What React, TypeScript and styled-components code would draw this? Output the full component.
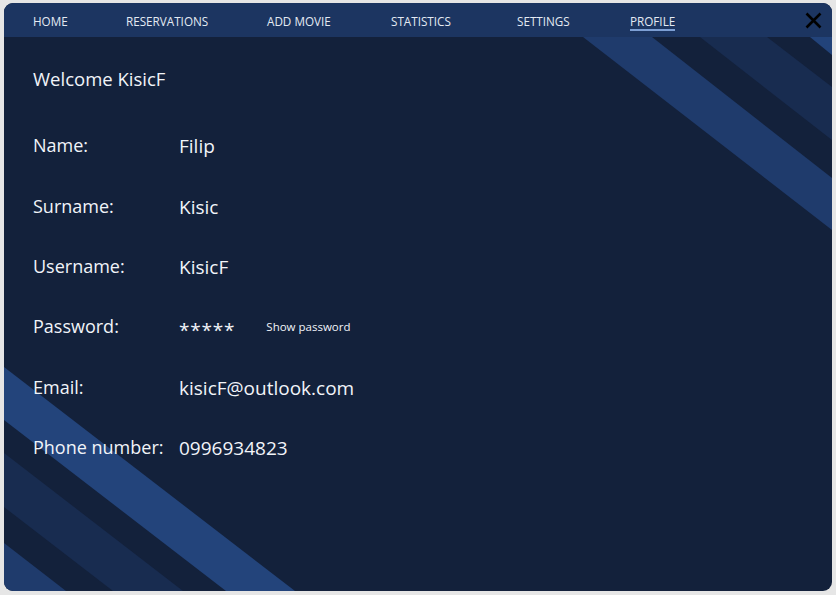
import styled, { createGlobalStyle } from 'styled-components';

const GlobalStyle = createGlobalStyle`
  html, body {
    margin: 0;
    padding: 0;
    background: #e6e6e6;
  }
  * {
    box-sizing: border-box;
  }
`;

// slot widths follow the spacing of the original menu
const navItems = [
  { title: 'Home', width: 93 },
  { title: 'Reservations', width: 141 },
  { title: 'Add movie', width: 124 },
  { title: 'Statistics', width: 126 },
  { title: 'Settings', width: 113 },
  { title: 'Profile', width: 60 },
];

const profile = [
  { label: 'Name:', value: 'Filip' },
  { label: 'Surname:', value: 'Kisic' },
  { label: 'Username:', value: 'KisicF' },
  { label: 'Password:', value: '*****', secret: true },
  { label: 'Email:', value: 'kisicF@outlook.com' },
  { label: 'Phone number:', value: '0996934823' },
];

function Stripes() {
  return (
    <Decor viewBox='0 0 828 554' preserveAspectRatio='none'>
      <polygon points='579,0 648,0 828,141 828,193' fill='#1f3b6c' />
      <polygon points='696,0 763,0 828,50 828,103' fill='#182c50' />
      <polygon points='806,0 828,0 828,18' fill='#22437a' />
      <polygon points='0,330 0,383 222,554 291,554' fill='#23447b' />
      <polygon points='0,416 0,470 109,554 179,554' fill='#182c50' />
      <polygon points='0,506 0,554 62,554' fill='#1f3b6c' />
    </Decor>
  );
}

function App() {
  return (
    <>
      <GlobalStyle />
      <Page>
        <Window>
          <Nav>
            {navItems.map((item) => (
              <NavSlot key={item.title} $width={item.width}>
                <NavItem $active={item.title === 'Profile'}>{item.title}</NavItem>
              </NavSlot>
            ))}
            <Close aria-label='close'>
              <svg width='17' height='17' viewBox='0 0 17 17'>
                <path d='M1.5 1.5 L15.5 15.5 M15.5 1.5 L1.5 15.5' stroke='#000' strokeWidth='2.6' />
              </svg>
            </Close>
          </Nav>
          <Body>
            <Stripes />
            <Content>
              <Welcome>Welcome KisicF</Welcome>
              <Fields>
                {profile.map((row) => (
                  <Row key={row.label}>
                    <Label>{row.label}</Label>
                    <Value $secret={row.secret}>{row.value}</Value>
                    {row.secret && <ShowPassword>Show password</ShowPassword>}
                  </Row>
                ))}
              </Fields>
            </Content>
          </Body>
        </Window>
      </Page>
    </>
  );
}
export default App;

const Page = styled.div`
  width: 836px;
  height: 595px;
  padding: 3px 4px 4px 4px;
`;

const Window = styled.div`
  width: 828px;
  height: 588px;
  border-radius: 9px;
  overflow: hidden;
  display: flex;
  flex-direction: column;
  background: #13213b;
  font-family: 'Open Sans', 'Noto Sans', sans-serif;
`;

const Nav = styled.div`
  height: 34px;
  flex-shrink: 0;
  display: flex;
  align-items: center;
  padding: 0 10px 0 29px;
  background: #1c3561;
`;

const NavSlot = styled.div<{ $width: number }>`
  width: ${(p) => p.$width}px;
  display: flex;
  padding-top: 4px;
`;

const NavItem = styled.div<{ $active?: boolean }>`
  font-size: 11.7px;
  line-height: 16px;
  text-transform: uppercase;
  color: #e4eaf3;
  border-bottom: 2px solid ${(p) => (p.$active ? '#7d9fd4' : 'transparent')};
`;

const Close = styled.div`
  margin-left: auto;
  width: 17px;
  height: 17px;
  display: flex;
  cursor: pointer;
`;

const Body = styled.div`
  position: relative;
  flex: 1;
  overflow: hidden;
`;

const Decor = styled.svg`
  position: absolute;
  inset: 0;
  width: 100%;
  height: 100%;
`;

const Content = styled.div`
  position: relative;
  padding: 28px 29px 0 29px;
  color: #f1f4f9;
`;

const Welcome = styled.div`
  font-size: 18.5px;
  line-height: 28px;
`;

const Fields = styled.div`
  margin-top: 23px;
  display: flex;
  flex-direction: column;
`;

const Row = styled.div`
  height: 60.4px;
  display: flex;
  align-items: center;
`;

const Label = styled.div`
  width: 146px;
  font-size: 18px;
  line-height: 24px;
  margin-top: -2px;
`;

const Value = styled.div<{ $secret?: boolean }>`
  font-size: 19px;
  line-height: 24px;
  letter-spacing: ${(p) => (p.$secret ? '0.8px' : '0')};
  padding-top: ${(p) => (p.$secret ? '6px' : '0')};
`;

const ShowPassword = styled.div`
  margin-left: 31px;
  font-size: 11.5px;
  line-height: 16px;
`;
